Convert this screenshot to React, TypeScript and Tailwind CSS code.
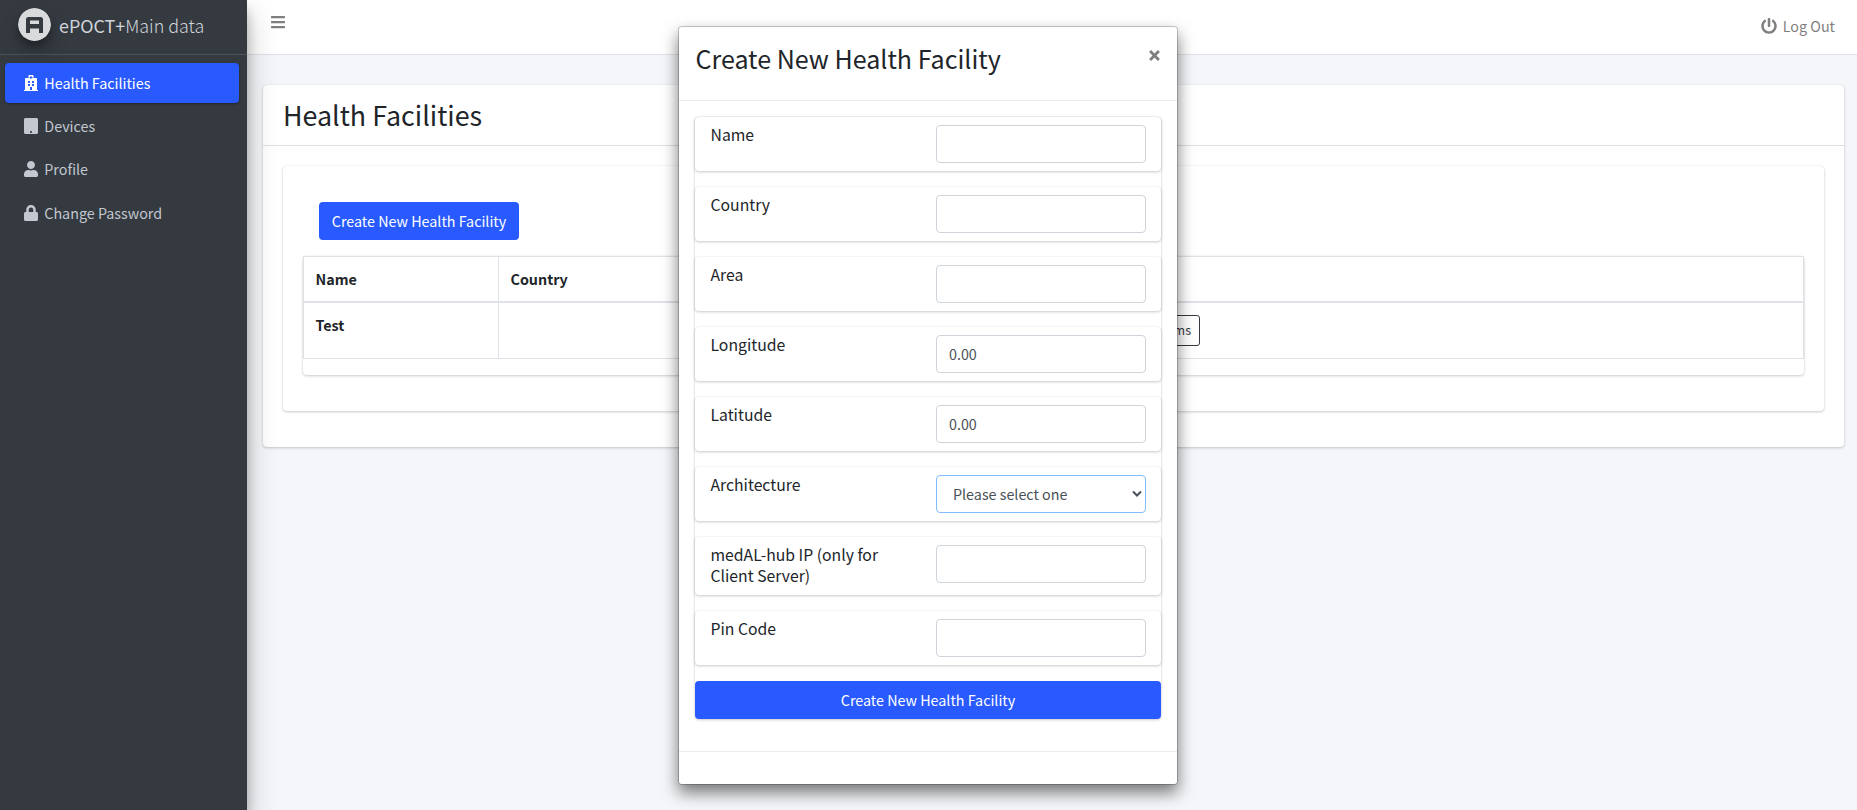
import React, { type ReactNode } from "react";
import { FaBars, FaHospital, FaLock, FaPowerOff, FaTablet, FaUser } from "react-icons/fa";

const cardShadow = "shadow-[0_0_1px_rgba(0,0,0,0.125),0_1px_3px_rgba(0,0,0,0.2)]";

function Logo() {
  return (
    <svg viewBox="0 0 33 33" className="h-[33px] w-[33px] rounded-full shadow-[0_10px_20px_rgba(0,0,0,0.19),0_6px_6px_rgba(0,0,0,0.23)]">
      <circle cx="16.500" cy="16.500" r="16.500" fill="#d9dadb" />
      <path
        d="M8 25V11.500Q8 9 10.500 9H22.500Q25 9 25 11.500V25H21V20.500H12V25ZM12 12.500V16H21V12.500Z"
        fill="#343a40"
        fillRule="evenodd"
      />
    </svg>
  );
}

function NavItem({ icon, label, active = false }: { icon: ReactNode; label: string; active?: boolean }) {
  return (
    <a
      className={
        active
          ? "flex h-10 items-center rounded bg-[#285aff] pl-[19px] text-white shadow-[0_1px_3px_rgba(0,0,0,0.12),0_1px_2px_rgba(0,0,0,0.24)]"
          : "flex h-10 items-center rounded pl-[19px] text-[#c2c7d0]"
      }
    >
      <span className="flex w-[14px] justify-center text-[16px]">{icon}</span>
      <span className="ml-[6.3px]">{label}</span>
    </a>
  );
}

function Field({ label, children }: { label: string; children: ReactNode }) {
  return (
    <div className={`mb-4 flex justify-between rounded bg-white px-[15px] pt-2 pb-2 ${cardShadow}`}>
      <div className="-mt-px mb-px ml-[0.5px] w-[190px] text-[15.75px] leading-[21px]">{label}</div>
      {children}
    </div>
  );
}

function Input({ value = "" }: { value?: string }) {
  return (
    <div className="flex h-[38px] w-[210px] items-center rounded border border-[#ced4da] bg-white px-3 text-[#495057]">
      {value}
    </div>
  );
}

function CreateDialog() {
  return (
    <div className="absolute top-[26px] left-[678px] flex h-[759px] w-[500px] flex-col rounded border border-black/20 bg-white bg-clip-padding shadow-[0_8px_16px_rgba(0,0,0,0.5)]">
      <div className="flex h-[74px] shrink-0 items-start justify-between border-b border-[#e9ecef] px-4 pt-[14px]">
        <h3 className="ml-[0.5px] text-[25.06px] leading-[34px]">Create New Health Facility</h3>
        <svg viewBox="0 0 10 10" className="mt-[9px] mr-px h-[11px] w-[11px]" stroke="#7f7f7f" strokeWidth="2.600">
          <path d="M1 1 9 9M9 1 1 9" />
        </svg>
      </div>
      <div className="h-[650px] shrink-0 px-4 pt-4">
        <div className={`flex flex-col rounded ${cardShadow}`}>
          <Field label="Name"><Input /></Field>
          <Field label="Country"><Input /></Field>
          <Field label="Area"><Input /></Field>
          <Field label="Longitude"><Input value="0.00" /></Field>
          <Field label="Latitude"><Input value="0.00" /></Field>
          <Field label="Architecture">
            <div className="flex h-[38px] w-[210px] items-center justify-between rounded border border-[#80bdff] bg-white pr-[3px] pl-4 text-[#495057]">
              Please select one
              <svg viewBox="0 0 10 8" className="h-2 w-[10px]" fill="none" stroke="#495057" strokeWidth="2">
                <path d="M1 1.5 5 5.500 9 1.500" />
              </svg>
            </div>
          </Field>
          <Field label="medAL-hub IP (only for Client Server)"><Input /></Field>
          <Field label="Pin Code"><Input /></Field>
          <button className="h-[38px] rounded bg-[#285aff] text-white">Create New Health Facility</button>
        </div>
      </div>
      <div className="grow border-t border-[#e9ecef]" />
    </div>
  );
}

export default function App() {
  return (
    <div className="relative flex h-[810px] w-[1857px] overflow-hidden bg-[#f4f6f9] font-['Noto_Sans_CJK_SC',sans-serif] text-[14.32px] leading-6 text-[#212529]">
      <aside className="z-10 w-[247px] shrink-0 bg-[#343a40] shadow-[0_14px_28px_rgba(0,0,0,0.25),0_10px_10px_rgba(0,0,0,0.22)]">
        <div className="flex h-[55px] items-start border-b border-[#4b545c] pt-2 pl-[18px]">
          <Logo />
          <span className="ml-2 pt-[5px] text-[17.9px] text-[#d0d4db]">
            ePOCT+<span className="font-light">Main data</span>
          </span>
        </div>
        <nav className="flex flex-col gap-[3.2px] px-[5px] pt-2 pr-2">
          <NavItem active icon={<FaHospital />} label="Health Facilities" />
          <NavItem icon={<FaTablet />} label="Devices" />
          <NavItem icon={<FaUser />} label="Profile" />
          <NavItem icon={<FaLock />} label="Change Password" />
        </nav>
      </aside>
      <div className="flex grow flex-col">
        <header className="flex h-[55px] shrink-0 items-start justify-between border-b border-[#dee2e6] bg-white pr-[22px] pl-[23px] text-[#7f7f7f]">
          <FaBars className="mt-[14px] text-[16px]" />
          <span className="mt-[14px] flex items-center gap-[6px]">
            <FaPowerOff className="text-[16px]" />
            Log Out
          </span>
        </header>
        <main className="pt-[30px] pr-[13px] pl-4">
          <section className={`h-[362px] rounded bg-white ${cardShadow}`}>
            <h2 className="flex h-[61px] items-center border-b border-black/[0.125] px-5 text-[26.85px]">Health Facilities</h2>
            <div className="px-5 pt-5">
              <div className={`h-[245px] rounded px-5 pt-[36px] ${cardShadow}`}>
                <button className="ml-4 h-[38px] w-[200px] rounded bg-[#285aff] text-white">Create New Health Facility</button>
                <div className={`mt-4 h-[119px] rounded ${cardShadow}`}>
                  <div className="flex h-[47px] border border-b-2 border-[#dee2e6] font-bold">
                    <div className="w-[195px] border-r border-[#dee2e6] px-[11.5px] py-[10px]">Name</div>
                    <div className="px-[11.5px] py-[10px]">Country</div>
                  </div>
                  <div className="flex h-[56px] border border-t-0 border-[#dee2e6]">
                    <div className="w-[195px] border-r border-[#dee2e6] px-[11.5px] py-[10px] font-bold">Test</div>
                    <div className="flex w-[701px] justify-end pt-3">
                      <button className="h-[31px] rounded-[3px] border border-[#343a40] px-2 pb-0.5 text-[12.53px] text-[#343a40]">Algorithms</button>
                    </div>
                  </div>
                </div>
              </div>
            </div>
          </section>
        </main>
      </div>
      <CreateDialog />
    </div>
  );
}
